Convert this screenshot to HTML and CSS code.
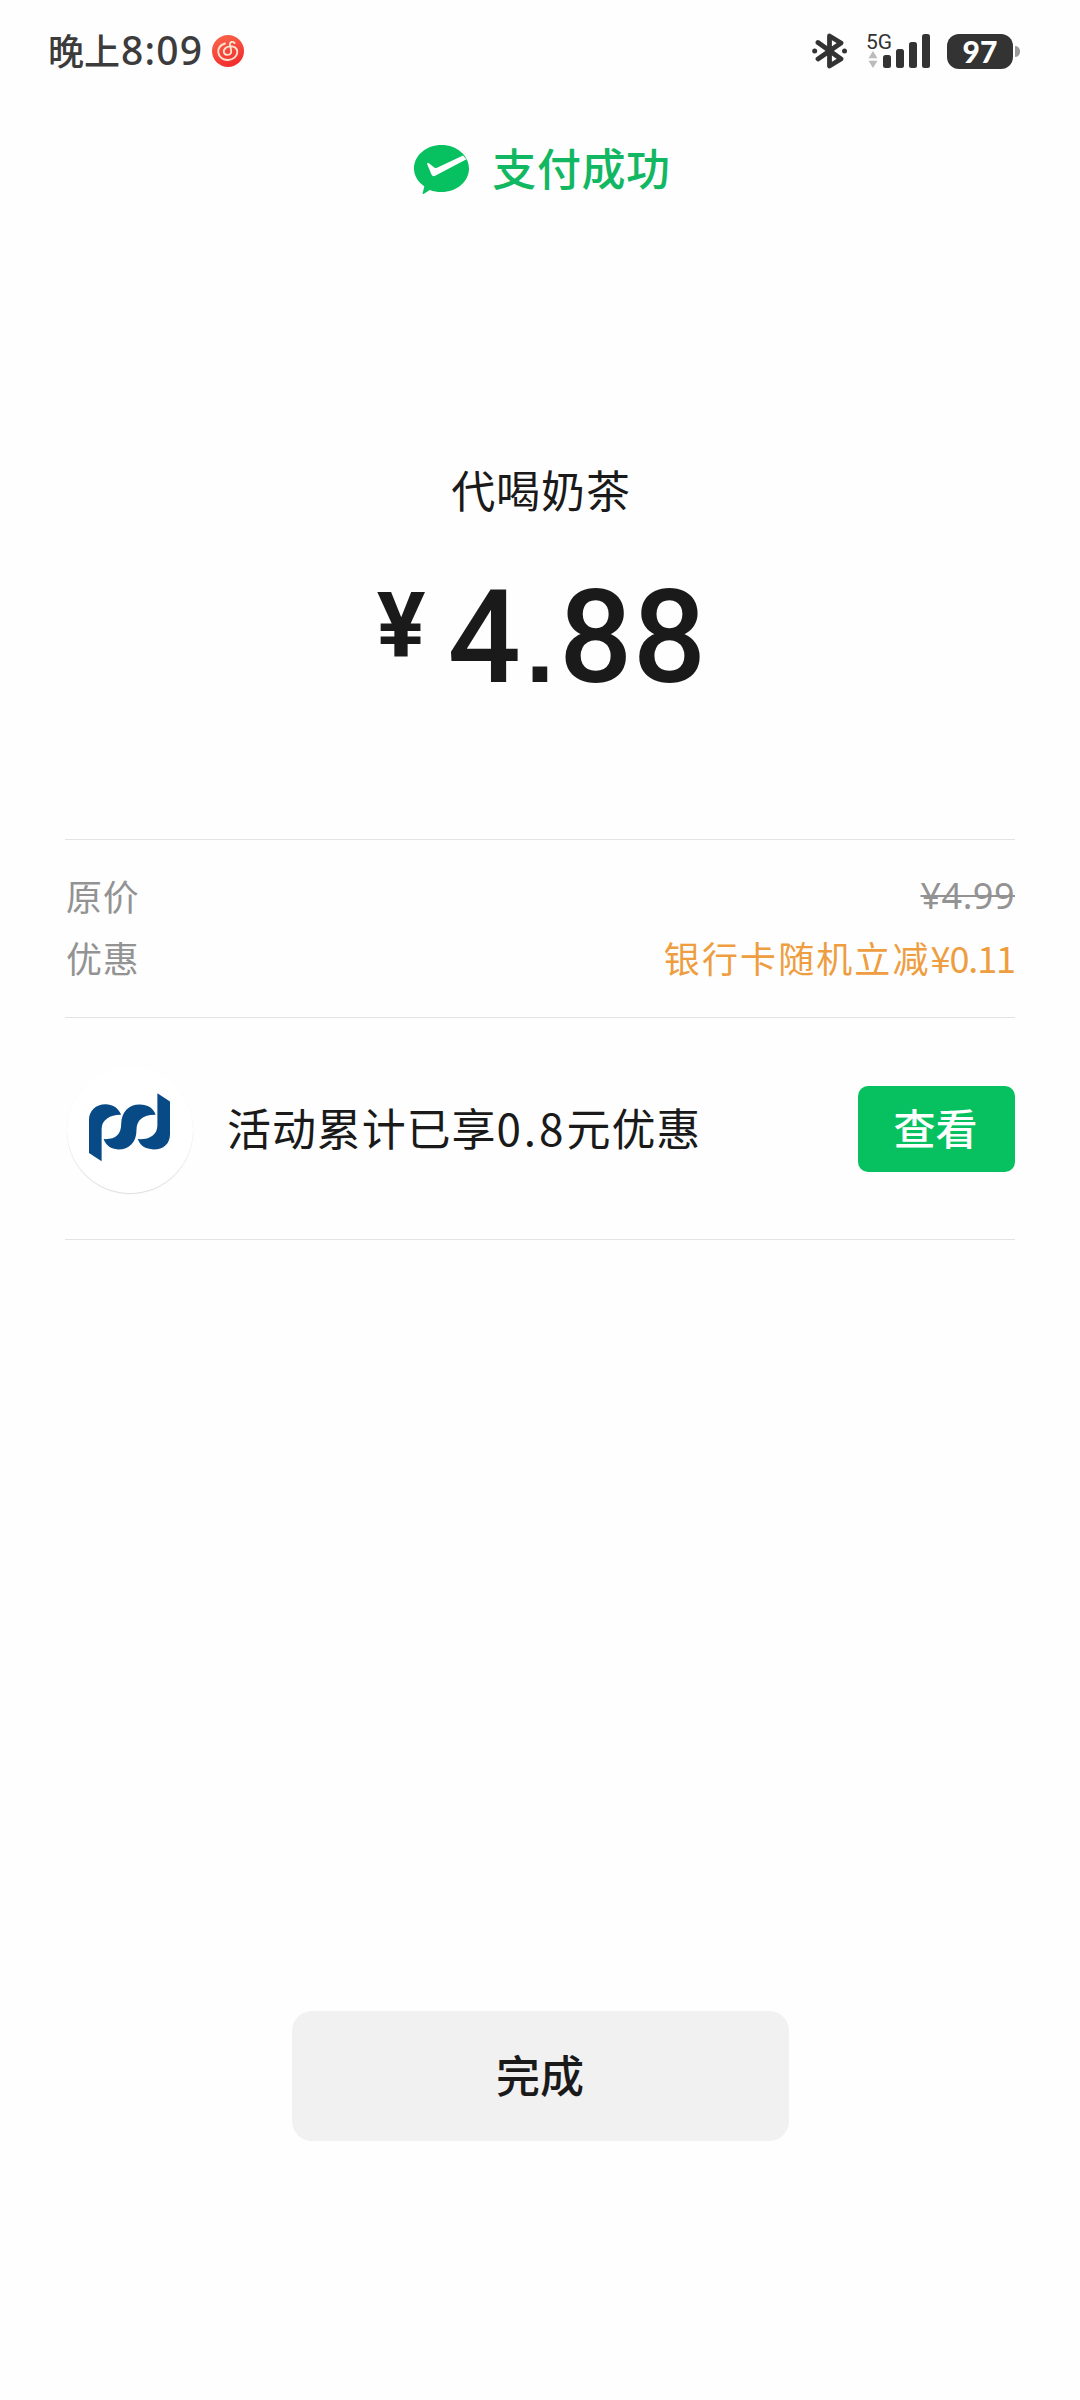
FILE: index.html
```html
<!DOCTYPE html>
<html lang="zh-CN">
<head>
<meta charset="utf-8">
<title>支付成功</title>
<link rel="stylesheet" href="styles.css">
</head>
<body>
<header class="status">
  <div class="status-left">
    <span class="clock">晚上<span class="clock-num">8:09</span></span>
    <svg class="music" viewBox="0 0 32 32">
      <defs><linearGradient id="red" x1="0" y1="0" x2="0.4" y2="1"><stop offset="0" stop-color="#fa6a4c"/><stop offset="1" stop-color="#f32f30"/></linearGradient></defs>
      <circle cx="16" cy="16" r="16" fill="url(#red)"/>
      <path d="M13 8.500C8 10 6 13.500 6.300 17.300C6.800 22 11 25.200 16 25C21.500 24.800 25.500 21 25.300 16.600C25 12.600 21.800 11 18 11.400C13.500 11.900 11.300 14.500 11.900 17.300C12.500 20.200 17 20.800 18.800 18.300C20 16.500 18.400 12.500 17.900 9.500C17.700 6.800 20.500 6 22.600 8" fill="none" stroke="#ffe3cf" stroke-width="1.900" stroke-linecap="round"/>
    </svg>
  </div>
  <div class="status-right">
    <svg class="bluetooth" viewBox="0 0 36 36">
      <path d="M6 9.500L29 26L17.500 33V3L29 10L6 26" fill="none" stroke="#333" stroke-width="4.800" stroke-linejoin="round" stroke-linecap="round"/>
      <circle cx="2.700" cy="18" r="2.500" fill="#333"/><circle cx="32.500" cy="18" r="2.500" fill="#333"/>
    </svg>
    <div class="network">
      <div class="network-type"><span>5G</span>
        <svg class="arrows" viewBox="0 0 10 17"><path d="M5 0L9.500 7.300H.5ZM5 17L.5 9.700H9.500Z" fill="#bbb"/></svg>
      </div>
      <svg class="bars" viewBox="0 0 47 34"><g fill="#333"><rect x="0" y="21" width="8" height="13" rx="2.500"/><rect x="13" y="15" width="8" height="19" rx="2.500"/><rect x="26" y="8" width="8" height="26" rx="2.500"/><rect x="39" y="0" width="8" height="34" rx="2.500"/></g></svg>
    </div>
    <div class="battery"><span class="level">97</span><span class="nub"></span></div>
  </div>
</header>
<main class="page">
  <h1 class="result">
    <svg class="bubble" viewBox="0 0 55 50">
      <path d="M27.500 0C42.700 0 55 10.500 55 23.500S42.700 47 27.500 47C23.500 47 19.300 46.200 15.800 44.900L9.500 48.900Q8.300 49.500 8.700 48.200L10.300 41.300C4 37 0 30.600 0 23.500C0 10.500 12.300 0 27.500 0Z" fill="#07c160"/>
      <path d="M49 10.400L23 22.700Q21.500 23.400 20.200 22.600L15.200 18.400Q12.700 16.800 13.300 19.400L17.600 29.800Q18.800 32 21.200 30.800L52.500 14.200Z" fill="#fff"/>
    </svg>
    <span>支付成功</span>
  </h1>
  <p class="payee">代喝奶茶</p>
  <p class="amount"><span class="yen">¥</span><span class="sum">4<span class="point">.</span>88</span></p>
  <dl class="details">
    <div class="row"><dt>原价</dt><dd class="original">¥4.99</dd></div>
    <div class="row"><dt>优惠</dt><dd class="discount">银行卡随机立减<span class="discount-num">¥0.11</span></dd></div>
  </dl>
  <section class="promo">
    <div class="bank">
      <svg class="bank-logo" viewBox="0 0 244 206"><path fill="#074a86" d="M0 80C0 53 20 33 50 33C70 33 88 43 97 65C66 64 38 79 38 108V205L0 180ZM44 138C79 140 97 125 97 92C98 57 119 34 153 34C177 34 193 44 201 65C164 64 143 80 143 111C143 147 122 169 88 169C66 169 51 157 44 138ZM206 0L244 25V123C244 151 225 169 195 169C170 169 154 158 147 138C181 140 206 126 206 96Z"/></svg>
    </div>
    <p class="promo-text">活动累计已享<span class="promo-num">0.8</span>元优惠</p>
    <button class="view">查看</button>
  </section>
  <button class="done">完成</button>
</main>
</body>
</html>
```
FILE: styles.css
```css
* { box-sizing: border-box; margin: 0; padding: 0; }
body {
  width: 1080px; height: 2400px; background: #fefefe; color: #1a1a1a;
  font-family: "Noto Sans CJK SC", sans-serif;
}
button { border: 0; font-family: inherit; }
svg { display: block; }
.status { height: 100px; padding: 0 60px 0 48px; display: flex; justify-content: space-between; align-items: center; color: #3c3c3c; }
.status-left, .status-right { display: flex; align-items: center; }
.clock { font-size: 36px; line-height: 52px; font-weight: 500; margin-top: -2px; }
.clock-num { font-size: 39px; letter-spacing: 1.2px; margin-left: 1px; font-family: "Noto Sans", sans-serif; }
.music { width: 32px; height: 32px; margin: 2px 0 0 9px; }
.bluetooth { width: 36px; height: 36px; margin: 2px 1px 0 0; }
.network { display: flex; align-items: flex-end; height: 34px; margin: 2px 0 0 17px; }
.network-type { width: 17px; height: 34px; display: flex; flex-direction: column; justify-content: space-between; font: 400 21px/16px Roboto, sans-serif; color: #333; }
.arrows { width: 10px; height: 17px; margin-left: 2px; }
.bars { width: 47px; height: 34px; }
.battery { display: flex; align-items: center; gap: 2px; margin: 2px 0 0 17px; }
.level { width: 66px; height: 35px; border-radius: 12px; background: #333; color: #fff; text-align: center; font: 900 30px/34px Lato, sans-serif; }
.nub { width: 5px; height: 11px; border-radius: 0 6px 6px 0; background: #999; }

.page { display: flex; flex-direction: column; padding: 0 65px; }
.result { height: 66px; margin-top: 36px; display: flex; justify-content: center; align-items: center; gap: 23px; color: #12b762; font-size: 44px; font-weight: 500; line-height: 64px; letter-spacing: .6px; padding-left: 5px; }
.result span { margin-top: -5px; }
.bubble { width: 55px; height: 50px; margin-top: 2px; }
.payee { margin-top: 255px; padding-left: 2px; font-size: 44px; line-height: 64px; letter-spacing: .9px; text-align: center; }
.amount { margin-top: 41px; height: 154px; padding-left: 3px; display: flex; justify-content: center; font-family: Roboto, sans-serif; }
.yen { font-size: 91px; line-height: 106px; font-weight: 700; margin: 11px 22px 0 0; }
.sum { font-size: 129px; line-height: 152px; font-weight: 500; letter-spacing: .3px; }
.point { display: inline-block; width: 38px; text-align: center; font: 700 104px/1 "Liberation Sans", sans-serif; }
.details { margin-top: 123px; height: 178px; padding-top: 24px; border-top: 1px solid #e3e3e3; font-size: 36px; }
.row { display: flex; justify-content: space-between; align-items: center; height: 62px; }
.row dt { color: #939393; letter-spacing: .8px; padding-left: 1px; }
.original { margin-top: 1px; color: #939393; font-family: "Noto Sans", sans-serif; letter-spacing: .5px; text-decoration: line-through; text-decoration-thickness: 2px; }
.discount { color: #ee9d40; letter-spacing: 2.1px; }
.discount-num { letter-spacing: -1.1px; }
.promo { height: 223px; display: flex; align-items: center; border: solid #e3e3e3; border-width: 1px 0; }
.bank { width: 126px; height: 126px; margin: 2px 34px 0 2px; border-radius: 50%; box-shadow: 0 1px 1px #ddd; background: #fff; display: flex; align-items: center; justify-content: center; }
.bank-logo { width: 81px; height: 69px; margin: 0 1px 4px 0; }
.promo-text { font-size: 44px; line-height: 64px; letter-spacing: .9px; flex: 1; padding-bottom: 3px; }
.promo-num { letter-spacing: 3px; }
.view { width: 157px; height: 86px; border-radius: 10px; background: #07c160; color: #fff; font-size: 42px; font-weight: 500; line-height: 80px; padding: 0 2px 3px 0; }
.done { width: 497px; height: 130px; margin: 771px auto 0; border-radius: 20px; background: #f1f1f1; color: #1a1a1a; font-size: 44px; font-weight: 500; padding-bottom: 5px; }
```
